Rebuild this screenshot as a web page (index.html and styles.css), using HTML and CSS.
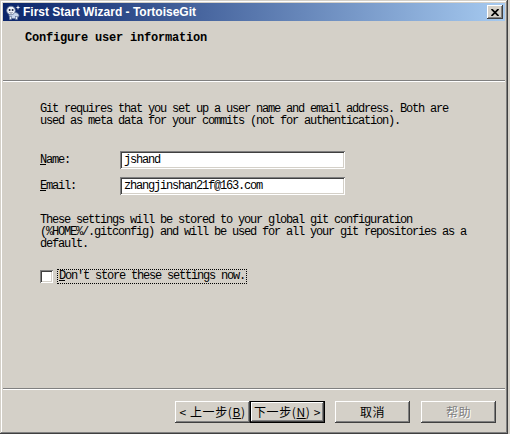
FILE: index.html
```html
<!DOCTYPE html>
<html lang="en">
<head>
    <meta charset="UTF-8">
    <title>First Start Wizard - TortoiseGit</title>
    <link rel="stylesheet" href="styles.css">
</head>
<body>

    <div class="window">

        <!-- Caption bar -->
        <div class="titlebar">
            <svg class="app-icon" width="16" height="16" viewBox="0 0 16 16">
                <ellipse cx="9" cy="11.5" rx="5" ry="3.2" fill="#c9d6ec" stroke="#5d6f93" stroke-width="0.8"/>
                <rect x="4.5" y="12.5" width="2" height="3" fill="#e6ecf7" stroke="#5d6f93" stroke-width="0.6"/>
                <rect x="10.5" y="12.5" width="2" height="3" fill="#e6ecf7" stroke="#5d6f93" stroke-width="0.6"/>
                <circle cx="6" cy="6.5" r="4.3" fill="#eef2fa" stroke="#5d6f93" stroke-width="0.8"/>
                <circle cx="4.6" cy="6" r="1" fill="#1a2340"/>
                <circle cx="7.6" cy="6" r="1" fill="#1a2340"/>
                <path d="M4.5 8.6 Q6 9.6 7.6 8.6" fill="none" stroke="#1a2340" stroke-width="0.6"/>
                <path d="M13 1 L13.6 3 L15.5 3.5 L13.6 4 L13 6 L12.4 4 L10.5 3.5 L12.4 3 Z" fill="#ffffff"/>
            </svg>
            <span class="title">First Start Wizard - TortoiseGit</span>
            <button class="close" type="button">
                <svg width="8" height="7" viewBox="0 0 8 7">
                    <path d="M0.5 0 L7.5 7 M7.5 0 L0.5 7" stroke="#000" stroke-width="1.7"/>
                </svg>
            </button>
        </div>

        <!-- Page header -->
        <div class="header">
            <h1>Configure user information</h1>
        </div>
        <div class="etched"></div>

        <!-- Page body -->
        <div class="page">
            <p class="text">Git requires that you set up a user name and email address. Both are used as meta data for your commits (not for authentication).</p>

            <div class="fields">
                <div class="field">
                    <label><u>N</u>ame:</label>
                    <div class="edit">jshand</div>
                </div>
                <div class="field">
                    <label><u>E</u>mail:</label>
                    <div class="edit">zhangjinshan21f@163.com</div>
                </div>
            </div>

            <p class="text note">These settings will be stored to your global git configuration (%HOME%/.gitconfig) and will be used for all your git repositories as a default.</p>

            <label class="check">
                <span class="box"></span>
                <span class="focus"><u>D</u>on't store these settings now.</span>
            </label>
        </div>

        <div class="etched"></div>

        <!-- Wizard buttons -->
        <div class="buttons">
            <button class="btn" type="button">&lt; 上一步(<u>B</u>)</button>
            <button class="btn default" type="button">下一步(<u>N</u>) &gt;</button>
            <button class="btn spaced" type="button">取消</button>
            <button class="btn spaced disabled" type="button">帮助</button>
        </div>

    </div>

</body>
</html>
```

FILE: styles.css
```css
/* Reset */
* {
    margin: 0;
    padding: 0;
    box-sizing: border-box;
}

body {
    background: #d4d0c8;
    color: #000;
    font-family: 'Liberation Mono', 'Noto Sans CJK SC', monospace;
}

/* Classic window frame */
.window {
    width: 508px;
    height: 434px;
    padding: 3px;
    display: flex;
    flex-direction: column;
    background: #d4d0c8;
    box-shadow:
        inset -1px -1px #404040,
        inset 1px 1px #d4d0c8,
        inset -2px -2px #808080,
        inset 2px 2px #ffffff;
}

/* Caption bar */
.titlebar {
    height: 18px;
    display: flex;
    align-items: center;
    background: linear-gradient(to right, #0a246a, #a6caf0);
    color: #fff;
}

.app-icon {
    margin-left: 2px;
    flex: none;
}

.title {
    margin-left: 2px;
    flex: 1;
    font-family: 'Liberation Sans', Arial, sans-serif;
    font-weight: bold;
    font-size: 12px;
    line-height: 18px;
}

.close {
    width: 16px;
    height: 14px;
    margin-right: 2px;
    display: flex;
    align-items: center;
    justify-content: center;
    border: none;
    background: #d4d0c8;
    box-shadow:
        inset -1px -1px #404040,
        inset 1px 1px #ffffff,
        inset -2px -2px #808080,
        inset 2px 2px #d4d0c8;
}

/* Header strip */
.header {
    height: 59px;
    padding: 11px 0 0 22px;
}

.header h1 {
    font-size: 12px;
    font-weight: bold;
    line-height: 12px;
    letter-spacing: -0.2px;
}

.etched {
    border-top: 1px solid #808080;
    border-bottom: 1px solid #ffffff;
}

/* Body */
.page {
    flex: 1;
    padding: 21px 0 0 37px;
}

.text {
    width: 432px;
    font-size: 12px;
    line-height: 12px;
    letter-spacing: -1.2px;
}

.fields {
    margin-top: 24px;
    display: flex;
    flex-direction: column;
    gap: 8px;
}

.field {
    display: flex;
    align-items: center;
    font-size: 12px;
    letter-spacing: -1.2px;
}

.field label {
    width: 80px;
}

.edit {
    width: 225px;
    height: 18px;
    padding: 2px 4px;
    line-height: 14px;
    background: #fff;
    box-shadow:
        inset 1px 1px #808080,
        inset -1px -1px #ffffff,
        inset 2px 2px #404040,
        inset -2px -2px #d4d0c8;
}

.note {
    margin-top: 19px;
}

/* Checkbox row */
.check {
    margin-top: 19px;
    display: flex;
    align-items: center;
    gap: 4px;
    font-size: 12px;
    letter-spacing: -1.2px;
}

.box {
    width: 13px;
    height: 13px;
    background: #fff;
    box-shadow:
        inset 1px 1px #808080,
        inset -1px -1px #ffffff,
        inset 2px 2px #404040,
        inset -2px -2px #d4d0c8;
}

.focus {
    height: 15px;
    padding: 0 1px;
    line-height: 13px;
    border: 1px dotted #000;
}

/* Buttons */
.buttons {
    height: 41px;
    padding: 11px 9px 0 0;
    display: flex;
    justify-content: flex-end;
    align-items: flex-start;
}

.btn {
    width: 75px;
    height: 22px;
    border: none;
    background: #d4d0c8;
    font-family: 'Noto Sans CJK SC', 'Liberation Sans', sans-serif;
    font-size: 12px;
    line-height: 16px;
    letter-spacing: 0.6px;
    color: #000;
    box-shadow:
        inset -1px -1px #404040,
        inset 1px 1px #ffffff,
        inset -2px -2px #808080,
        inset 2px 2px #d4d0c8;
}

.btn.default {
    box-shadow:
        inset 0 0 0 1px #000,
        inset -2px -2px #404040,
        inset 2px 2px #ffffff,
        inset -3px -3px #808080;
}

.btn.spaced {
    margin-left: 10px;
}

.btn.disabled {
    margin-left: 11px;
    color: #808080;
    text-shadow: 1px 1px #ffffff;
}
```
